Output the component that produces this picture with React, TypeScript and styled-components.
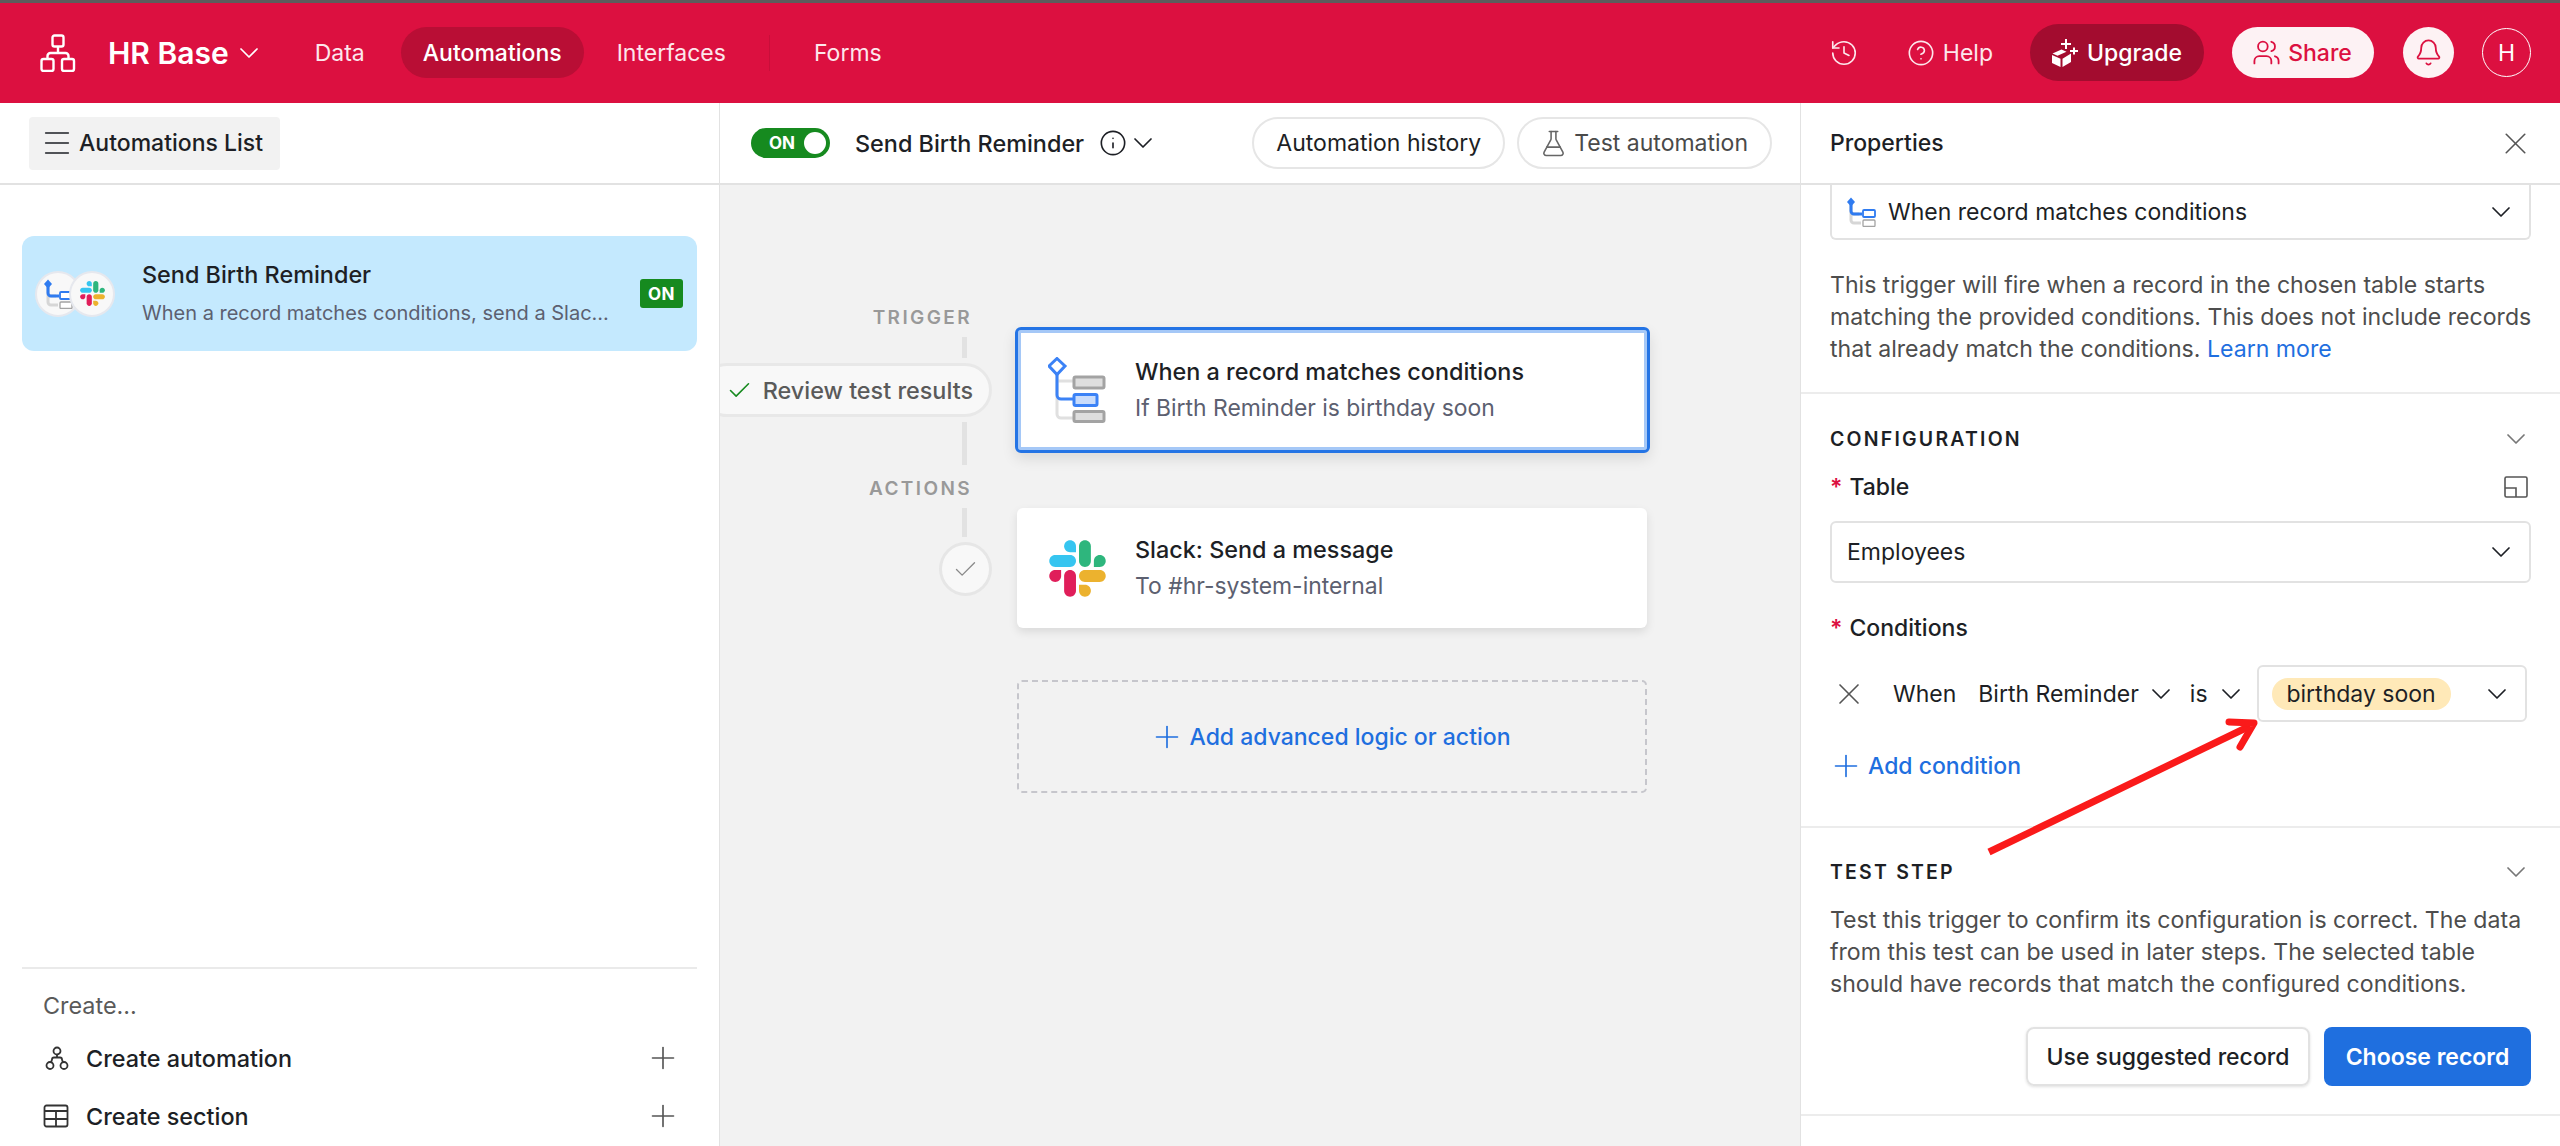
import React from 'react'
import styled, { createGlobalStyle } from 'styled-components'
import {
  Bell,
  Check,
  ChevronDown,
  CircleHelp,
  FlaskConical,
  History,
  Info,
  Menu,
  Plus,
  Users,
  X,
} from 'lucide-react'

const GlobalStyle = createGlobalStyle`
  html, body { margin: 0; padding: 0; background: #fff; }
  body { font-family: Inter, "Liberation Sans", sans-serif; color: #1d1f25; }
  * { box-sizing: border-box; }
`

const Page = styled.div`
  position: relative;
  width: 2560px;
  height: 1146px;
  overflow: hidden;
  display: flex;
  flex-direction: column;
`

// holds a lucide icon whose drawing is much smaller than its own box
const IconSlot = styled.div<{ $box: number; $left?: number; $color?: string }>`
  width: ${(p) => p.$box}px;
  height: ${(p) => p.$box}px;
  margin-left: ${(p) => p.$left ?? 0}px;
  flex: none;
  display: inline-flex;
  align-items: center;
  justify-content: center;
  color: ${(p) => p.$color ?? 'inherit'};
  svg {
    flex: none;
  }
`

const Header = styled.header`
  height: 103px;
  flex: none;
  display: flex;
  align-items: center;
  background: #dc1040;
  border-top: 3px solid #5c5c5c;
  padding: 0 29px 1px 40px;
  color: #fff;
`
const Brand = styled.div`
  display: flex;
  align-items: center;
  margin-left: 32px;
  margin-right: 36px;
  gap: 12px;
  font-size: 30px;
  font-weight: 600;
`
const NavItem = styled.div<{ $active?: boolean }>`
  height: 51px;
  display: flex;
  align-items: center;
  padding: 0 22px;
  margin-right: ${(p) => (p.$active ? 11 : 14)}px;
  border-radius: 26px;
  font-size: 23px;
  font-weight: ${(p) => (p.$active ? 500 : 400)};
  color: ${(p) => (p.$active ? '#fff' : '#fde7ec')};
  background: ${(p) => (p.$active ? '#b90e35' : 'transparent')};
`
const NavDivider = styled.div`
  width: 1px;
  height: 36px;
  background: #c90e3a;
  margin: 0 22px 0 7px;
`
const HeaderRight = styled.div`
  margin-left: auto;
  display: flex;
  align-items: center;
`
const HelpLink = styled.div`
  display: flex;
  align-items: center;
  gap: 9px;
  margin-left: 52px;
  margin-right: 37px;
  font-size: 23px;
  color: #fde7ec;
`
const UpgradeButton = styled.div`
  height: 57px;
  width: 174px;
  display: flex;
  align-items: center;
  justify-content: center;
  gap: 9px;
  border-radius: 29px;
  background: #a30c2f;
  font-size: 23px;
  font-weight: 500;
  color: #fff;
`
const ShareButton = styled.div`
  height: 51px;
  width: 142px;
  margin-left: 28px;
  display: flex;
  align-items: center;
  justify-content: center;
  gap: 9px;
  border-radius: 26px;
  background: #fdf2f4;
  font-size: 23px;
  font-weight: 500;
  color: #dc1040;
`
const BellButton = styled.div`
  width: 51px;
  height: 51px;
  margin-left: 29px;
  display: flex;
  align-items: center;
  justify-content: center;
  border-radius: 50%;
  background: #fdf2f4;
  color: #dc1040;
`
const Avatar = styled.div`
  width: 49px;
  height: 49px;
  margin-left: 28px;
  display: flex;
  align-items: center;
  justify-content: center;
  border-radius: 50%;
  border: 1.5px solid #fff;
  font-size: 23px;
  color: #fff;
`

const Body = styled.div`
  flex: 1;
  min-height: 0;
  display: flex;
`
const LeftPanel = styled.aside`
  width: 720px;
  flex: none;
  display: flex;
  flex-direction: column;
  border-right: 1px solid #e2e2e2;
`
const CenterPanel = styled.main`
  width: 1080px;
  flex: none;
  display: flex;
  flex-direction: column;
  background: #f2f2f2;
  overflow: hidden;
`
const RightPanel = styled.aside`
  flex: 1;
  min-width: 0;
  display: flex;
  flex-direction: column;
  border-left: 1px solid #e2e2e2;
`
const SubHeader = styled.div`
  height: 82px;
  flex: none;
  display: flex;
  align-items: center;
  background: #fff;
  border-bottom: 2px solid #e2e2e2;
`

const ListButton = styled.div`
  margin-left: 29px;
  width: 251px;
  height: 53px;
  display: flex;
  align-items: center;
  gap: 10px;
  padding-left: 16px;
  border-radius: 4px;
  background: #f2f2f2;
  font-size: 23px;
  font-weight: 500;
`
const AutomationCard = styled.div`
  margin: 51px 22px 0;
  height: 115px;
  display: flex;
  align-items: center;
  padding: 0 14px 0 13px;
  border-radius: 12px;
  background: #c4e9fe;
`
const CardIcons = styled.div`
  width: 107px;
  flex: none;
  display: flex;
`
const IconDisc = styled.div`
  width: 46px;
  height: 46px;
  display: flex;
  align-items: center;
  justify-content: center;
  border-radius: 50%;
  background: #f8f8f8;
  border: 2px solid #e6e8ee;
  & + & {
    margin-left: -12px;
  }
`
const CardText = styled.div`
  flex: 1;
  min-width: 0;
  display: flex;
  flex-direction: column;
  gap: 13px;
`
const CardTitle = styled.div`
  font-size: 23.4px;
  font-weight: 500;
  line-height: 26px;
`
const CardSub = styled.div`
  font-size: 20px;
  line-height: 25px;
  color: #5c6070;
  white-space: nowrap;
`
const OnBadge = styled.div`
  width: 43px;
  height: 29px;
  flex: none;
  display: flex;
  align-items: center;
  justify-content: center;
  border-radius: 3px;
  background: #168a1f;
  color: #fff;
  font-size: 17px;
  font-weight: 700;
  letter-spacing: 0.5px;
`
const CreateBlock = styled.div`
  margin: auto 22px 0;
  padding: 22px 0 0 21px;
  height: 179px;
  border-top: 2px solid #eaeaea;
`
const CreateLabel = styled.div`
  font-size: 23.4px;
  line-height: 30px;
  color: #5a5a5a;
`
const CreateRows = styled.div`
  margin-top: 8px;
`
const CreateRow = styled.div`
  height: 58px;
  display: flex;
  align-items: center;
  gap: 17px;
  padding-right: 21px;
  font-size: 23.4px;
  font-weight: 500;
  span {
    flex: 1;
  }
`

const Toggle = styled.div`
  margin-left: 31px;
  width: 79px;
  height: 30px;
  display: flex;
  align-items: center;
  justify-content: space-between;
  padding: 0 4px 0 18px;
  border-radius: 15px;
  background: #168a1f;
  color: #fff;
  font-size: 17px;
  font-weight: 700;
  &::after {
    content: '';
    width: 22px;
    height: 22px;
    border-radius: 50%;
    background: #fff;
  }
`
const FlowTitle = styled.div`
  margin-left: 25px;
  margin-right: 16px;
  font-size: 23.4px;
  font-weight: 500;
`
const TitleIcons = styled.div`
  display: flex;
  align-items: center;
  gap: 10px;
`
const PillButton = styled.div<{ $muted?: boolean }>`
  height: 52px;
  display: flex;
  align-items: center;
  gap: 9px;
  padding: 0 22px;
  border-radius: 26px;
  background: #fff;
  border: 2px solid #e6e6e6;
  font-size: 23px;
  color: ${(p) => (p.$muted ? '#4a4a4a' : '#1d1f25')};
`
const PillGroup = styled.div`
  margin-left: auto;
  margin-right: 28px;
  display: flex;
  gap: 12px;
`

const Canvas = styled.div`
  flex: 1;
  padding-top: 118px;
  display: grid;
  grid-template-columns: 297px 630px;
  align-content: start;
`
const Gutter = styled.div`
  display: flex;
  flex-direction: column;
  align-items: flex-end;
`
const TriggerGutter = styled(Gutter)`
  height: 205px;
`
const ActionGutter = styled(Gutter)`
  height: 120px;
`
const RailLabel = styled.div<{ $top?: number }>`
  margin-right: 45px;
  margin-top: ${(p) => p.$top ?? 0}px;
  height: 30px;
  line-height: 30px;
  font-size: 19px;
  font-weight: 600;
  letter-spacing: 2.4px;
  color: #999;
`
const Rail = styled.div<{ $h: number; $top: number }>`
  width: 5px;
  height: ${(p) => p.$h}px;
  margin-right: 50px;
  margin-top: ${(p) => p.$top}px;
  background: #e2e2e2;
`
const ReviewPill = styled.div`
  margin-right: 25px;
  margin-top: 5px;
  width: 292px;
  height: 54px;
  flex: none;
  display: flex;
  align-items: center;
  justify-content: flex-end;
  gap: 12px;
  padding-right: 16px;
  border-radius: 27px;
  background: #f8f8f8;
  border: 3px solid #e8e8e8;
  color: #5a5a5a;
  font-size: 23.4px;
  font-weight: 500;
`
const StatusDisc = styled.div`
  width: 53px;
  height: 54px;
  margin-right: 25px;
  margin-top: 5px;
  display: flex;
  align-items: center;
  justify-content: center;
  border-radius: 50%;
  background: #f8f8f8;
  border: 3px solid #e6e6e6;
  color: #8a8a8a;
`
const StepCard = styled.div<{ $selected?: boolean }>`
  height: ${(p) => (p.$selected ? 126 : 120)}px;
  margin: ${(p) => (p.$selected ? '24px -3px 0 -2px' : '0')};
  display: flex;
  align-items: center;
  gap: 29px;
  padding-left: ${(p) => (p.$selected ? 30 : 32)}px;
  border-radius: 6px;
  background: #fff;
  border: ${(p) => (p.$selected ? '3px solid #2474e5' : 'none')};
  box-shadow: ${(p) =>
    p.$selected
      ? 'inset 0 0 0 3px #a5c8f7, 0 6px 14px rgba(0,0,0,.1)'
      : '0 4px 10px rgba(0,0,0,.1)'};
`
const StepText = styled.div`
  display: flex;
  flex-direction: column;
  gap: 10px;
`
const StepTitle = styled.div`
  font-size: 23.4px;
  font-weight: 500;
  line-height: 26px;
`
const StepSub = styled.div`
  font-size: 22.9px;
  line-height: 26px;
  color: #5c6070;
`
const AddBox = styled.div`
  grid-column: 2;
  margin-top: 52px;
  height: 113px;
  display: flex;
  align-items: center;
  justify-content: center;
  gap: 10px;
  border: 2.5px dashed #c6c6cc;
  border-radius: 5px;
  color: #1f6fdf;
  font-size: 23px;
  font-weight: 500;
`

const PanelTitle = styled.div`
  margin-left: 29px;
  font-size: 23px;
  font-weight: 500;
  flex: 1;
`
const CloseSlot = styled(IconSlot)`
  margin-right: 31px;
`
const Section = styled.section<{ $h: number; $top?: number }>`
  height: ${(p) => p.$h}px;
  padding: ${(p) => p.$top ?? 0}px 29px 0;
  border-bottom: 2px solid #ececec;
`
const SelectBox = styled.div<{ $clipped?: boolean }>`
  height: ${(p) => (p.$clipped ? 55 : 62)}px;
  margin-top: ${(p) => (p.$clipped ? 0 : 19)}px;
  display: flex;
  align-items: center;
  gap: 12px;
  padding: 0 20px 0 ${(p) => (p.$clipped ? 14 : 15)}px;
  border: 2px solid #e2e2e2;
  border-top: ${(p) => (p.$clipped ? 'none' : '2px solid #e2e2e2')};
  border-radius: ${(p) => (p.$clipped ? '0 0 6px 6px' : '6px')};
  font-size: 23px;
  span {
    flex: 1;
  }
`
const Description = styled.p<{ $top: number }>`
  margin: ${(p) => p.$top}px 0 0;
  font-size: 23.1px;
  line-height: 32px;
  color: #4d4d4d;
  white-space: nowrap;
  a {
    color: #1f6fdf;
  }
`
const SectionHeading = styled.div`
  display: flex;
  align-items: center;
  justify-content: space-between;
  padding-right: 7px;
  font-size: 19.5px;
  line-height: 24px;
  font-weight: 600;
  letter-spacing: 2.2px;
  color: #1d1f25;
`
const FieldLabel = styled.div<{ $top: number }>`
  display: flex;
  align-items: center;
  gap: 7px;
  margin-top: ${(p) => p.$top}px;
  font-size: 23px;
  font-weight: 500;
  line-height: 30px;
  b {
    color: #dc1040;
    font-weight: 600;
  }
  svg {
    margin-left: auto;
    margin-right: 3px;
  }
`
const ConditionRow = styled.div`
  display: flex;
  align-items: center;
  height: 57px;
  margin-top: 22px;
  font-size: 23px;
`
const ConditionWord = styled.div<{ $gap: number; $inner?: number }>`
  display: flex;
  align-items: center;
  gap: ${(p) => p.$inner ?? 14}px;
  margin-left: ${(p) => p.$gap}px;
`
const ValueBox = styled.div`
  width: 270px;
  height: 57px;
  margin-left: 18px;
  display: flex;
  align-items: center;
  justify-content: space-between;
  padding: 0 20px 0 13px;
  border: 2px solid #e2e2e2;
  border-radius: 6px;
`
const ChoicePill = styled.div`
  height: 32px;
  width: 179px;
  display: flex;
  align-items: center;
  justify-content: center;
  border-radius: 16px;
  background: #ffe9b8;
`
const AddLink = styled.div`
  display: flex;
  align-items: center;
  gap: 9px;
  margin-top: 29px;
  height: 30px;
  padding-left: 3px;
  color: #1f6fdf;
  font-size: 23px;
  font-weight: 500;
`
const ButtonRow = styled.div`
  display: flex;
  justify-content: flex-end;
  gap: 14px;
  margin-top: 27px;
`
const GhostButton = styled.div`
  width: 284px;
  height: 59px;
  display: flex;
  align-items: center;
  justify-content: center;
  border-radius: 8px;
  border: 2px solid #e2e2e2;
  box-shadow: 0 1px 3px rgba(0, 0, 0, 0.12);
  font-size: 23px;
  font-weight: 500;
`
const PrimaryButton = styled.div`
  width: 207px;
  height: 59px;
  display: flex;
  align-items: center;
  justify-content: center;
  border-radius: 8px;
  background: #1f6fdf;
  color: #fff;
  font-size: 23px;
  font-weight: 600;
`
const Arrow = styled.svg`
  position: absolute;
  left: 1980px;
  top: 715px;
  pointer-events: none;
`

const BaseLogo = () => (
  <svg width="36" height="38" viewBox="0 0 36 38" fill="none" stroke="#fff" strokeWidth="2.4">
    <rect x="12.5" y="1.5" width="11" height="11" rx="2" />
    <rect x="1.5" y="25" width="12" height="12" rx="2" />
    <rect x="22" y="25" width="12" height="12" rx="2" />
    <path d="M18 12.5V19M7.5 25v-3a3 3 0 0 1 3-3h15a3 3 0 0 1 3 3v3" />
  </svg>
)

const UpgradeIcon = () => (
  <svg width="26" height="28" viewBox="0 0 26 28" fill="#fff">
    <path d="M0.500 14.500L9.500 10.500l5 2.200-9 4z" />
    <path d="M0 16l8.500 3.800V28L0 24z" />
    <path d="M19 14.500V23l-8.500 5v-8.200z" />
    <path d="M13 0h2v4h4v2h-4v4h-2V6H9V4h4zM21 8.500h2v2.500h3v2h-3v2.500h-2V13h-3v-2h3z" />
  </svg>
)

const TriggerGlyph = () => (
  <svg width="58" height="66" viewBox="0 0 58 66" fill="none">
    <path d="M9 9v48a4 4 0 0 0 4 4h13M9 24h17" stroke="#e0e0e0" strokeWidth="3" />
    <path d="M9 16v22a4 4 0 0 0 4 4h13" stroke="#3b82f6" strokeWidth="3" />
    <path d="M9 1.500L17 9 9 17.500 1 9z" fill="#fff" stroke="#3b82f6" strokeWidth="3" />
    <rect x="26" y="20" width="30" height="11" rx="1.500" fill="#dedede" stroke="#a3a3a3" strokeWidth="3" />
    <rect x="26" y="37.500" width="23" height="11" rx="1.500" fill="#c9dcfb" stroke="#3b82f6" strokeWidth="3" />
    <rect x="26" y="54.500" width="30" height="10" rx="1.500" fill="#dedede" stroke="#a3a3a3" strokeWidth="3" />
  </svg>
)

const MiniTrigger = ({ size = 30 }: { size?: number }) => (
  <svg width={size} height={size} viewBox="0 0 30 30" fill="none">
    <path d="M5 6v17a3 3 0 0 0 3 3h7M5 17h8" stroke="#d6d6d6" strokeWidth="3" />
    <path d="M5 6v8a3 3 0 0 0 3 3h8" stroke="#2f7bf0" strokeWidth="3" />
    <path d="M5 0.500l4 4.500-4 4.500L1 5z" fill="#2f7bf0" />
    <rect x="17" y="13" width="12" height="7" rx="1" fill="#fff" stroke="#2f7bf0" strokeWidth="1.800" />
    <rect x="17" y="23" width="12" height="6.500" rx="1" fill="#fff" stroke="#a3a3a3" strokeWidth="1.300" />
  </svg>
)

const SlackLogo = ({ size }: { size: number }) => (
  <svg width={size} height={size} viewBox="0 0 124 124">
    <path fill="#E01E5A" d="M26.400 78.200c0 7.100-5.800 12.900-12.900 12.900S.6 85.300.6 78.200c0-7.100 5.800-12.900 12.900-12.900h12.900v12.900z" />
    <path fill="#E01E5A" d="M32.900 78.200c0-7.100 5.800-12.900 12.900-12.900s12.900 5.800 12.900 12.900v32.300c0 7.100-5.800 12.900-12.900 12.900s-12.900-5.800-12.900-12.900V78.200z" />
    <path fill="#36C5F0" d="M45.800 26.400c-7.100 0-12.900-5.800-12.900-12.900S38.700.6 45.800.6s12.900 5.800 12.900 12.900v12.900H45.800z" />
    <path fill="#36C5F0" d="M45.800 32.900c7.100 0 12.900 5.800 12.900 12.900s-5.800 12.900-12.900 12.900H13.500C6.400 58.700.6 52.900.6 45.800s5.800-12.900 12.900-12.900h32.300z" />
    <path fill="#2EB67D" d="M97.600 45.800c0-7.100 5.800-12.900 12.900-12.900s12.900 5.800 12.900 12.900-5.800 12.900-12.900 12.900H97.600V45.800z" />
    <path fill="#2EB67D" d="M91.100 45.800c0 7.100-5.800 12.900-12.900 12.900s-12.900-5.800-12.900-12.900V13.500C65.300 6.400 71.100.6 78.200.6s12.900 5.800 12.900 12.900v32.300z" />
    <path fill="#ECB22E" d="M78.200 97.600c7.100 0 12.900 5.800 12.900 12.900s-5.800 12.900-12.900 12.900-12.900-5.800-12.900-12.900V97.600h12.900z" />
    <path fill="#ECB22E" d="M78.200 91.100c-7.100 0-12.900-5.800-12.900-12.900s5.800-12.900 12.900-12.900h32.300c7.100 0 12.900 5.800 12.900 12.900s-5.800 12.900-12.900 12.900H78.200z" />
  </svg>
)

const AutomationGlyph = () => (
  <IconSlot $box={24} $left={2}>
    <svg width="24" height="24" viewBox="0 0 24 24" fill="none" stroke="#333" strokeWidth="1.800">
      <circle cx="12" cy="5" r="3.500" />
      <circle cx="5" cy="19.500" r="3.500" />
      <circle cx="19" cy="19.500" r="3.500" />
      <path d="M12 8.500v3M6 16.500l1-3a2 2 0 0 1 2-2h6a2 2 0 0 1 2 2l1 3" />
    </svg>
  </IconSlot>
)

const SectionGlyph = () => (
  <svg width="26" height="24" viewBox="0 0 26 24" fill="none" stroke="#333" strokeWidth="1.800">
    <rect x="1.500" y="1.500" width="23" height="21" rx="2" />
    <path d="M1.500 7h23M1.500 15h23M13 7v15.500" />
  </svg>
)

const PopoutGlyph = () => (
  <svg width="24" height="24" viewBox="0 0 24 24" fill="none" stroke="#555" strokeWidth="1.600">
    <rect x="1" y="2" width="22" height="20" rx="1.500" />
    <path d="M1 13h11v9" />
  </svg>
)

const Chevron = ({ color = 'currentColor' }: { color?: string }) => (
  <IconSlot $box={16}>
    <ChevronDown size={32} color={color} strokeWidth={1.3} />
  </IconSlot>
)

const BigPlus = ({ color }: { color?: string }) => (
  <IconSlot $box={26} $color={color}>
    <Plus size={36} strokeWidth={1.1} />
  </IconSlot>
)

export default function App() {
  return (
    <>
      <GlobalStyle />
      <Page>
        <Header>
          <BaseLogo />
          <Brand>
            HR Base
            <Chevron />
          </Brand>
          <NavItem>Data</NavItem>
          <NavItem $active>Automations</NavItem>
          <NavItem>Interfaces</NavItem>
          <NavDivider />
          <NavItem>Forms</NavItem>
          <HeaderRight>
            <IconSlot $box={25} $color="#fde7ec">
              <History size={30} strokeWidth={1.3} />
            </IconSlot>
            <HelpLink>
              <IconSlot $box={25}>
                <CircleHelp size={28} strokeWidth={1.4} />
              </IconSlot>
              Help
            </HelpLink>
            <UpgradeButton>
              <UpgradeIcon />
              Upgrade
            </UpgradeButton>
            <ShareButton>
              <IconSlot $box={25}>
                <Users size={29} strokeWidth={1.5} />
              </IconSlot>
              Share
            </ShareButton>
            <BellButton>
              <Bell size={29} strokeWidth={1.5} />
            </BellButton>
            <Avatar>H</Avatar>
          </HeaderRight>
        </Header>

        <Body>
          <LeftPanel>
            <SubHeader>
              <ListButton>
                <IconSlot $box={24}>
                  <Menu size={34} strokeWidth={1.1} />
                </IconSlot>
                Automations List
              </ListButton>
            </SubHeader>
            <AutomationCard>
              <CardIcons>
                <IconDisc>
                  <MiniTrigger size={30} />
                </IconDisc>
                <IconDisc>
                  <SlackLogo size={25} />
                </IconDisc>
              </CardIcons>
              <CardText>
                <CardTitle>Send Birth Reminder</CardTitle>
                <CardSub>When a record matches conditions, send a Slac...</CardSub>
              </CardText>
              <OnBadge>ON</OnBadge>
            </AutomationCard>
            <CreateBlock>
              <CreateLabel>Create...</CreateLabel>
              <CreateRows>
                <CreateRow>
                  <AutomationGlyph />
                  <span>Create automation</span>
                  <BigPlus color="#555" />
                </CreateRow>
                <CreateRow>
                  <IconSlot $box={26}>
                    <SectionGlyph />
                  </IconSlot>
                  <span>Create section</span>
                  <BigPlus color="#555" />
                </CreateRow>
              </CreateRows>
            </CreateBlock>
          </LeftPanel>

          <CenterPanel>
            <SubHeader>
              <Toggle>ON</Toggle>
              <FlowTitle>Send Birth Reminder</FlowTitle>
              <TitleIcons>
                <IconSlot $box={25}>
                  <Info size={28} strokeWidth={1.4} />
                </IconSlot>
                <Chevron />
              </TitleIcons>
              <PillGroup>
                <PillButton>Automation history</PillButton>
                <PillButton $muted>
                  <IconSlot $box={24} $color="#666">
                    <FlaskConical size={29} strokeWidth={1.3} />
                  </IconSlot>
                  Test automation
                </PillButton>
              </PillGroup>
            </SubHeader>
            <Canvas>
              <TriggerGutter>
                <RailLabel>TRIGGER</RailLabel>
                <Rail $h={21} $top={4} />
                <ReviewPill>
                  <IconSlot $box={22} $color="#168a1f">
                    <Check size={27} strokeWidth={1.4} />
                  </IconSlot>
                  Review test results
                </ReviewPill>
                <Rail $h={43} $top={5} />
                <RailLabel $top={9}>ACTIONS</RailLabel>
              </TriggerGutter>
              <StepCard $selected>
                <TriggerGlyph />
                <StepText>
                  <StepTitle>When a record matches conditions</StepTitle>
                  <StepSub>If Birth Reminder is birthday soon</StepSub>
                </StepText>
              </StepCard>
              <ActionGutter>
                <Rail $h={29} $top={0} />
                <StatusDisc>
                  <Check size={27} strokeWidth={1.2} />
                </StatusDisc>
              </ActionGutter>
              <StepCard>
                <SlackLogo size={57} />
                <StepText>
                  <StepTitle>Slack: Send a message</StepTitle>
                  <StepSub>To #hr-system-internal</StepSub>
                </StepText>
              </StepCard>
              <AddBox>
                <BigPlus />
                Add advanced logic or action
              </AddBox>
            </Canvas>
          </CenterPanel>

          <RightPanel>
            <SubHeader>
              <PanelTitle>Properties</PanelTitle>
              <CloseSlot $box={28} $color="#555">
                <X size={37} strokeWidth={1.05} />
              </CloseSlot>
            </SubHeader>
            <Section $h={209}>
              <SelectBox $clipped>
                <MiniTrigger />
                <span>When record matches conditions</span>
                <Chevron />
              </SelectBox>
              <Description $top={29}>
                This trigger will fire when a record in the chosen table starts
                <br />
                matching the provided conditions. This does not include records
                <br />
                that already match the conditions. <a>Learn more</a>
              </Description>
            </Section>
            <Section $h={434} $top={33}>
              <SectionHeading>
                CONFIGURATION
                <Chevron color="#777" />
              </SectionHeading>
              <FieldLabel $top={21}>
                <b>*</b>
                Table
                <PopoutGlyph />
              </FieldLabel>
              <SelectBox>
                <span>Employees</span>
                <Chevron />
              </SelectBox>
              <FieldLabel $top={30}>
                <b>*</b>
                Conditions
              </FieldLabel>
              <ConditionRow>
                <IconSlot $box={26} $left={6} $color="#555">
                  <X size={36} strokeWidth={1.1} />
                </IconSlot>
                <ConditionWord $gap={31}>When</ConditionWord>
                <ConditionWord $gap={22}>
                  Birth Reminder
                  <Chevron />
                </ConditionWord>
                <ConditionWord $gap={21} $inner={15}>
                  is
                  <Chevron />
                </ConditionWord>
                <ValueBox>
                  <ChoicePill>birthday soon</ChoicePill>
                  <Chevron />
                </ValueBox>
              </ConditionRow>
              <AddLink>
                <BigPlus />
                Add condition
              </AddLink>
            </Section>
            <Section $h={288} $top={32}>
              <SectionHeading>
                TEST STEP
                <Chevron color="#777" />
              </SectionHeading>
              <Description $top={20}>
                Test this trigger to confirm its configuration is correct. The data
                <br />
                from this test can be used in later steps. The selected table
                <br />
                should have records that match the configured conditions.
              </Description>
              <ButtonRow>
                <GhostButton>Use suggested record</GhostButton>
                <PrimaryButton>Choose record</PrimaryButton>
              </ButtonRow>
            </Section>
          </RightPanel>
        </Body>

        <Arrow width="285" height="145" viewBox="1980 715 285 145" fill="none" stroke="#fa1a1a" strokeWidth="7" strokeLinecap="round" strokeLinejoin="round">
          <path d="M1989 852L2250 726" strokeLinecap="butt" />
          <path d="M2229 722L2254 723L2240 747" />
        </Arrow>
      </Page>
    </>
  )
}
